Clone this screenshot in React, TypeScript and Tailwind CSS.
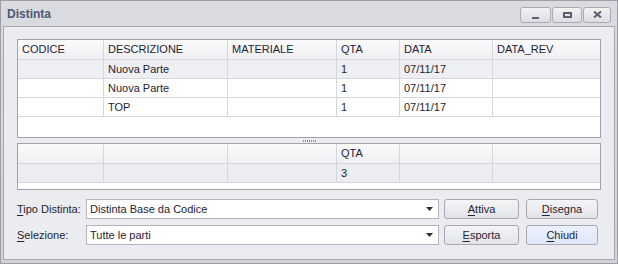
const font = { fontFamily: '"Liberation Sans", Arial, sans-serif' }

const cols = 'grid grid-cols-[86px_124px_109px_63px_93px_1fr]'

const rows = [
  { desc: 'Nuova Parte', qta: '1', data: '07/11/17', bg: 'bg-[#eeeff2]' },
  { desc: 'Nuova Parte', qta: '1', data: '07/11/17', bg: 'bg-white' },
  { desc: 'TOP', qta: '1', data: '07/11/17', bg: 'bg-white' },
]

function Cell({ children, last }: { children?: React.ReactNode; last?: boolean }) {
  return (
    <div
      className={`truncate pl-[4px] leading-[18px] ${last ? '' : 'border-r border-[#d6d7db]'}`}
    >
      {children}
    </div>
  )
}

function WinButton({ w, children }: { w: string; children: React.ReactNode }) {
  return (
    <div
      className={`${w} flex h-[16px] items-center justify-center rounded-[3px] border border-[#a9abb3] bg-gradient-to-b from-[#f3f3f5] to-[#dcdde2]`}
    >
      {children}
    </div>
  )
}

function Combo({ value }: { value: string }) {
  return (
    <div className="flex h-[20px] w-[353px] items-center border border-[#b4b5bc] bg-white pl-[3px] pr-[5px]">
      <span className="flex-1 truncate">{value}</span>
      <svg width="7" height="4" viewBox="0 0 7 4">
        <path d="M0 0h7L3.5 4z" fill="#2a2f3a" />
      </svg>
    </div>
  )
}

function Btn({ k, rest, w, blue }: { k: string; rest: string; w: string; blue?: boolean }) {
  return (
    <div
      className={`${w} flex h-[20px] items-center justify-center rounded-[3px] border border-[#a7a9b1] bg-gradient-to-b ${
        blue ? 'from-[#edf1fc] to-[#dfe6f8]' : 'from-[#f5f5f7] to-[#e2e3e7]'
      }`}
    >
      <span>
        <span className="underline underline-offset-2">{k}</span>
        {rest}
      </span>
    </div>
  )
}

export default function App() {
  return (
    <div
      style={font}
      className="flex h-[264px] w-[618px] flex-col border border-[#9d9ea6] bg-gradient-to-b from-[#dadbe0] to-[#d2d3d8] text-[11px] text-[#1f2433]"
    >
      {/* title bar */}
      <div className="flex h-[25px] items-center pl-[6px] pr-[6px]">
        <span className="flex-1 text-[12px] font-bold text-[#4f5872]">Distinta</span>
        <div className="flex gap-[1px] pt-[2px]">
          <WinButton w="w-[31px]">
            <div className="mt-[6px] h-[2px] w-[7px] bg-[#5a6070]" />
          </WinButton>
          <WinButton w="w-[30px]">
            <div className="h-[6px] w-[9px] border-2 border-[#5a6070]" />
          </WinButton>
          <WinButton w="w-[28px]">
            <svg width="9" height="7" viewBox="0 0 9 7">
              <path d="M1 0.5l7 6M8 0.5l-7 6" stroke="#5a6070" strokeWidth="2" />
            </svg>
          </WinButton>
        </div>
      </div>

      {/* client */}
      <div className="mx-[2px] mb-[3px] flex flex-1 flex-col border border-[#a6a7ae] bg-[#ebecef] pl-[13px] pr-[13px] pt-[12px]">
        {/* grid 1 */}
        <div className="flex h-[99px] flex-col border border-[#a0a1a9] bg-white">
          <div className={`${cols} h-[20px] border-b border-[#d6d7db] bg-gradient-to-b from-[#fafafb] to-[#f0f0f2] leading-[19px]`}>
            <Cell>CODICE</Cell>
            <Cell>DESCRIZIONE</Cell>
            <Cell>MATERIALE</Cell>
            <Cell>QTA</Cell>
            <Cell>DATA</Cell>
            <Cell last>DATA_REV</Cell>
          </div>
          {rows.map((r, i) => (
            <div key={i} className={`${cols} h-[19px] border-b border-[#d6d7db] ${r.bg}`}>
              <Cell />
              <Cell>{r.desc}</Cell>
              <Cell />
              <Cell>{r.qta}</Cell>
              <Cell>{r.data}</Cell>
              <Cell last />
            </div>
          ))}
        </div>

        {/* splitter */}
        <div className="flex h-[5px] items-center justify-center">
          <div className="h-[2px] w-[13px] bg-[repeating-linear-gradient(90deg,#8d93a6_0px,#8d93a6_1px,transparent_1px,transparent_2px)]" />
        </div>

        {/* grid 2 */}
        <div className="flex h-[47px] flex-col border border-[#a0a1a9] bg-white">
          <div className={`${cols} h-[20px] border-b border-[#d6d7db] bg-gradient-to-b from-[#fafafb] to-[#f0f0f2]`}>
            <Cell />
            <Cell />
            <Cell />
            <Cell>QTA</Cell>
            <Cell />
            <Cell last />
          </div>
          <div className={`${cols} h-[19px] border-b border-[#d6d7db] bg-[#ecedf0]`}>
            <Cell />
            <Cell />
            <Cell />
            <Cell>3</Cell>
            <Cell />
            <Cell last />
          </div>
        </div>

        {/* form */}
        <div className="mt-[9px] flex flex-col gap-[6px]">
          <div className="flex items-center">
            <span className="w-[69px]">
              <span className="underline underline-offset-2">T</span>ipo Distinta:
            </span>
            <Combo value="Distinta Base da Codice" />
            <div className="ml-[5px] flex gap-[7px]">
              <Btn k="A" rest="ttiva" w="w-[75px]" />
              <Btn k="D" rest="isegna" w="w-[72px]" />
            </div>
          </div>
          <div className="flex items-center">
            <span className="w-[69px]">
              <span className="underline underline-offset-2">S</span>elezione:
            </span>
            <Combo value="Tutte le parti" />
            <div className="ml-[5px] flex gap-[7px]">
              <Btn k="E" rest="sporta" w="w-[75px]" />
              <Btn k="C" rest="hiudi" w="w-[72px]" blue />
            </div>
          </div>
        </div>
      </div>
    </div>
  )
}
